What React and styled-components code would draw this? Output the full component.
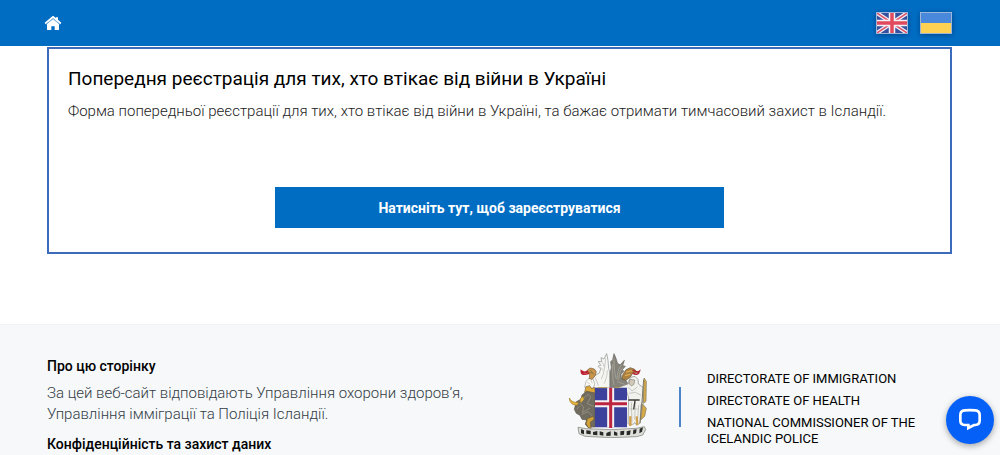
import React from 'react';
import styled, { createGlobalStyle } from 'styled-components';

const GlobalStyle = createGlobalStyle`
  *, *::before, *::after {
    box-sizing: border-box;
  }

  body {
    margin: 0;
    background: #fff;
    color: #000;
    font-family: Roboto, 'Liberation Sans', sans-serif;
  }
`;

const Page = styled.div`
  display: flex;
  flex-direction: column;
  min-height: 100vh;
`;

const TopBar = styled.header`
  display: flex;
  justify-content: space-between;
  align-items: center;
  height: 46px;
  padding: 0 48px 0 44px;
  background: #006dc3;
`;

const HomeLink = styled.a`
  display: flex;
  color: #fff;
`;

const Languages = styled.nav`
  display: flex;
  gap: 12px;
`;

const LanguageLink = styled.a`
  display: flex;
  border: 1px solid #9db6d8;
  box-shadow: 0 1px 5px rgba(0, 20, 70, 0.45);
`;

const Main = styled.main`
  padding: 1px 48px 70px 47px;
`;

const Card = styled.section`
  display: flex;
  flex-direction: column;
  padding: 16px 19px 24px;
  border: 2px solid #3c6bbb;
`;

const CardTitle = styled.h1`
  margin: 0;
  font-size: 19px;
  line-height: 28px;
  font-weight: 400;
`;

const CardText = styled.p`
  margin: 8px 0 66px;
  color: #222;
  font-size: 15px;
  line-height: 20px;
  font-weight: 300;
`;

const RegisterButton = styled.button`
  align-self: center;
  width: 52%;
  height: 41px;
  border: 0;
  background: #006dc3;
  color: #fff;
  font-family: inherit;
  font-size: 14px;
  font-weight: 700;
  cursor: pointer;
`;

const Footer = styled.footer`
  display: flex;
  flex: 1;
  justify-content: space-between;
  padding: 28px 48px 0 47px;
  border-top: 1px solid #f0f2f3;
  background: #f6f8fa;
`;

const About = styled.div`
  width: 50%;
  padding-top: 4px;
`;

const FooterTitle = styled.h2`
  margin: 0;
  font-size: 14px;
  line-height: 18px;
  font-weight: 500;
`;

const FooterText = styled.p`
  margin: 8px 0 10px;
  color: #333c44;
  font-size: 15px;
  line-height: 21px;
  font-weight: 300;
`;

const Authorities = styled.div`
  display: flex;
  align-items: flex-start;
  width: 42%;
  margin-right: 4px;
`;

const Divider = styled.span`
  flex: none;
  width: 2px;
  height: 40px;
  margin: 34px 26px 0 30px;
  background: #4a84cb;
`;

const AuthorityList = styled.ul`
  display: flex;
  flex: 1;
  flex-direction: column;
  gap: 6px;
  margin: 0;
  padding: 18px 32px 0 0;
  list-style: none;
  font-size: 13px;
  line-height: 16px;
`;

const ChatButton = styled.button`
  position: fixed;
  right: 6px;
  bottom: 11px;
  display: flex;
  align-items: center;
  justify-content: center;
  width: 48px;
  height: 48px;
  padding: 0;
  border: 0;
  border-radius: 50%;
  background: #0560f8;
  box-shadow: 0 2px 6px rgba(0, 0, 0, 0.35);
  cursor: pointer;
`;

const HomeIcon = () => (
  <svg width="18" height="16" viewBox="0 0 54 48" aria-hidden="true">
    <path d="M27 2 36 9V7h6v7l10 9-3 5-22-18L5 28l-3-5z" fill="#fff" />
    <path d="M9 27 27 12l18 15v18H32V34H22v11H9z" fill="#fff" />
    <path d="M6 28 27 11l21 17" fill="none" stroke="#9fc6e8" strokeWidth="2" />
  </svg>
);

const BritishFlag = () => (
  <svg width="30" height="20" viewBox="0 0 60 40" aria-hidden="true">
    <path d="M0 0h60v40H0z" fill="#35509f" />
    <path d="M0 0 60 40M60 0 0 40" stroke="#f3eef5" strokeWidth="8" />
    <path d="M0 0 60 40M60 0 0 40" stroke="#dc5568" strokeWidth="3" />
    <path d="M30 0v40M0 20h60" stroke="#f5f0f4" strokeWidth="13" />
    <path d="M30 0v40M0 20h60" stroke="#e04a5c" strokeWidth="7" />
  </svg>
);

const UkrainianFlag = () => (
  <svg width="30" height="20" viewBox="0 0 60 40" aria-hidden="true">
    <path d="M0 0h60v20H0z" fill="#4a88dc" />
    <path d="M0 20h60v20H0z" fill="#ffd152" />
  </svg>
);

const CoatOfArms = () => (
  <svg width="81" height="85" viewBox="24 38 243 255" role="img" aria-label="Coat of arms of Iceland">
    {/* eagle */}
    <path d="M92 144 94 120 104 106 118 98 122 86 114 78 122 75 115 63 125 64 123 52 132 56 140 40 144 60 146 84 150 100V144z" fill="#f5f5f2" stroke="#8a8c89" strokeWidth="2" />
    <path d="M137 54c-3 25-4 45-13 62M127 66l6 14M121 80l9 10M142 90c-1 20-5 30-10 40M106 112l9 24" stroke="#b4b6b3" strokeWidth="2" fill="none" />
    <path d="m74 141 4-18 10-10 11 3 5 14-4 14z" fill="#fafaf6" stroke="#a09f98" strokeWidth="2" />
    <path d="m82 126 9 6M92 119l5 10" stroke="#b9b8b0" strokeWidth="2" />
    {/* griffin wing */}
    <path d="M150 144V100L154 82 152 64 158 58 162 40 168 54 172 68 180 74 193 60 188 76 196 78 187 88 192 93 183 102 184 112 194 116 204 130 196 144z" fill="#85827a" stroke="#66645c" strokeWidth="2" />
    <path d="M162 54c-1 24 2 42 6 60M158 72c-1 24 0 44 4 62M186 72c-11 12-14 28-15 46M188 82c-8 9-11 20-12 36M172 124l22 8" stroke="#b0ada5" strokeWidth="2" fill="none" />
    {/* dragon heads */}
    <path d="m82 89 9-6 12 3 6 8-4 13-9 10-8-2 1-12-9-7z" fill="#c9954a" stroke="#75603d" strokeWidth="2" />
    <path d="m91 89 9 13M84 96l14 2" stroke="#7a6845" strokeWidth="2" />
    <path d="M84 92c-6 5-14 5-20 0 0 13 12 11 24 6" fill="none" stroke="#bd1e30" strokeWidth="5" />
    <path d="m188 104 10-16 13-6 13 5 6 9-13 4-6 10-13 10-12-4z" fill="#ad8140" stroke="#65563c" strokeWidth="2" />
    <path d="m199 95 17-4M195 106l16-4" stroke="#dcac54" strokeWidth="4" />
    <path d="M218 98c11 7 18 3 20-5-7 5-14 0-20-4" fill="none" stroke="#b52c32" strokeWidth="5" />
    {/* bull */}
    <path d="m74 155 4-16 11-3 5 8 11-2v20l-28 1z" fill="#dda837" stroke="#716044" strokeWidth="2" />
    <path d="M49 184 63 177 66 164 80 153 105 158V260H83L76 252 80 239 66 237 60 225 49 219 43 207z" fill="#716c60" stroke="#57534a" strokeWidth="2" />
    <path d="m69 176 15-14 8 8-10 20 18 8M59 189l12 11-4 17 23-14M65 222l20-8 14 16M50 206l9-8" fill="none" stroke="#938d7d" strokeWidth="3" />
    <path d="M53 194C38 196 29 188 28 173c6 11 14 14 27 13zM63 187c-6-7-1-17 7-18l2 8" fill="#e7b63e" stroke="#9c7727" strokeWidth="2" />
    <path d="m82 235 17-7 4 8-12 10 2 18-9-3-6-11z" fill="#d0a139" stroke="#6a5736" strokeWidth="2" />
    {/* giant */}
    <path d="m170 143 20-7 16-6-2-5 8-14 13-3 9 9 1 14 14 10 1 38-7 15-3 54-10 7-5-8-6 5-15-1 2-78-8-26z" fill="#f1f1ed" stroke="#86867f" strokeWidth="2" />
    <path d="m209 117 15 2-2 13-8 5-6-6z" fill="#d2c8b6" stroke="#8a857b" strokeWidth="2" />
    <path d="m206 141 10 11 16-12M207 159l19-3 17 9M209 206h26M214 186l2 60M226 186l-2 52M236 194l-3 44" stroke="#b2b2ac" strokeWidth="2" fill="none" />
    <path d="M205 179h34M225 181l-4 26" stroke="#3d3b34" strokeWidth="4" />
    <path d="m251 118-5 65-6 66" stroke="#7b7768" strokeWidth="3" fill="none" />
    <path d="m252 113 7 10-1 60-8 6zM248 191l11 13-5 24-12 11z" fill="#d8ab48" stroke="#7b7359" strokeWidth="2" />
    <path d="M211 228v29M230 228l2 26" stroke="#d0a04c" strokeWidth="7" />
    {/* basalt base */}
    <path d="m54 261 24 4 75 3 75-4 25-5 4 9-9 16-18 5-77 3-78-4-18-8z" fill="#dededa" stroke="#777770" strokeWidth="2" />
    <path d="m63 266 9 4v12l-9-3zM79 270l13 1v11l-13-2zM99 275l13-3v13l-13-2zM119 273l11 3v10l-11-2zM139 278l13-5v13l-13 1zM162 273l10 4v9l-10-1zM181 273l12-2-1 12-11 2zM200 273l12-3-2 13-10 2zM220 268l10-1-2 12-9 3zM239 265l10-4-3 13-8 5z" fill="#282a28" />
    {/* shield */}
    <path d="M105 142h96v119h-96z" fill="#3c429c" />
    <path d="M152 142v119M105 190h96" stroke="#f6f1f3" strokeWidth="21" />
    <path d="M152 142v121M105 190h96" stroke="#bd2440" strokeWidth="9" />
    <path d="M113 142h28M163 142h18" stroke="#b59b5a" strokeWidth="3" />
  </svg>
);

const ChatIcon = () => (
  <svg width="24" height="24" viewBox="0 0 72 72" aria-hidden="true">
    <path
      d="M30 51H20C11 50 7 46 7 38V21C7 12 11 8 20 7Q36 6 52 7C61 8 65 12 65 21V38C65 46 61 50 52 51H48L31 60V47"
      fill="none"
      stroke="#fff"
      strokeWidth="8"
      strokeLinejoin="miter"
    />
  </svg>
);

const authorities = [
  'DIRECTORATE OF IMMIGRATION',
  'DIRECTORATE OF HEALTH',
  'NATIONAL COMMISSIONER OF THE ICELANDIC POLICE',
];

const App = () => {
  return (
    <Page>
      <GlobalStyle />
      <TopBar>
        <HomeLink href="#" aria-label="Головна">
          <HomeIcon />
        </HomeLink>
        <Languages>
          <LanguageLink href="#en" aria-label="English">
            <BritishFlag />
          </LanguageLink>
          <LanguageLink href="#uk" aria-label="Українська">
            <UkrainianFlag />
          </LanguageLink>
        </Languages>
      </TopBar>
      <Main>
        <Card>
          <CardTitle>Попередня реєстрація для тих, хто втікає від війни в Україні</CardTitle>
          <CardText>
            Форма попередньої реєстрації для тих, хто втікає від війни в Україні, та бажає отримати тимчасовий захист в Ісландії.
          </CardText>
          <RegisterButton type="button">Натисніть тут, щоб зареєструватися</RegisterButton>
        </Card>
      </Main>
      <Footer>
        <About>
          <FooterTitle>Про цю сторінку</FooterTitle>
          <FooterText>
            За цей веб-сайт відповідають Управління охорони здоров’я, Управління імміграції та Поліція Ісландії.
          </FooterText>
          <FooterTitle>Конфіденційність та захист даних</FooterTitle>
        </About>
        <Authorities>
          <CoatOfArms />
          <Divider />
          <AuthorityList>
            {authorities.map((name) => (
              <li key={name}>{name}</li>
            ))}
          </AuthorityList>
        </Authorities>
      </Footer>
      <ChatButton type="button" aria-label="Чат">
        <ChatIcon />
      </ChatButton>
    </Page>
  );
};

export default App;
